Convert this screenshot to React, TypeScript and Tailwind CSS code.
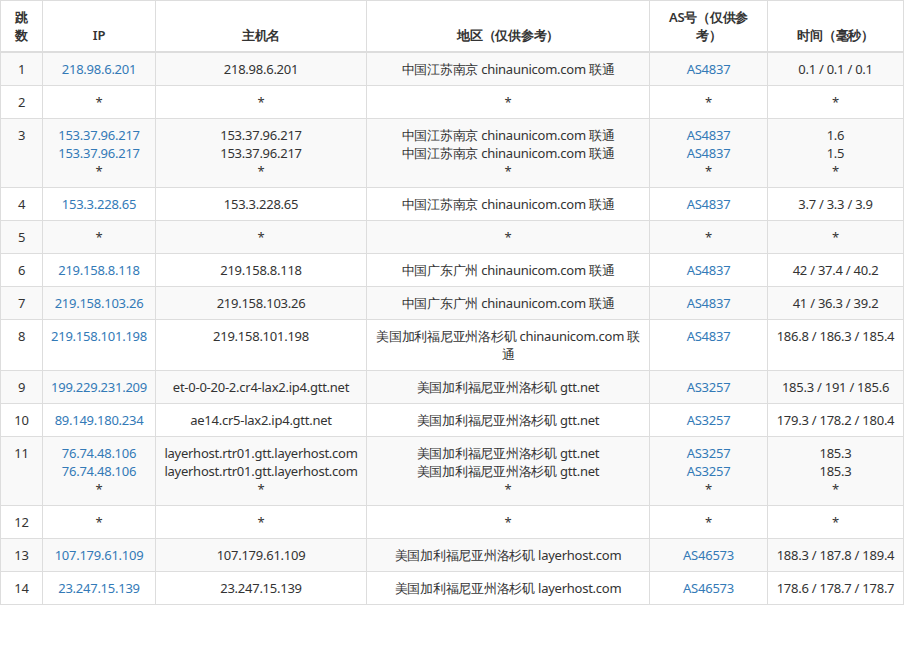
type Row = { n: number; ip: string[]; host: string[]; area: string[]; as: string[]; t: string[] };

const star = ["*"];
const rows: Row[] = [
  { n: 1, ip: ["218.98.6.201"], host: ["218.98.6.201"], area: ["中国江苏南京 chinaunicom.com 联通"], as: ["AS4837"], t: ["0.1 / 0.1 / 0.1"] },
  { n: 2, ip: star, host: star, area: star, as: star, t: star },
  {
    n: 3,
    ip: ["153.37.96.217", "153.37.96.217", "*"],
    host: ["153.37.96.217", "153.37.96.217", "*"],
    area: ["中国江苏南京 chinaunicom.com 联通", "中国江苏南京 chinaunicom.com 联通", "*"],
    as: ["AS4837", "AS4837", "*"],
    t: ["1.6", "1.5", "*"],
  },
  { n: 4, ip: ["153.3.228.65"], host: ["153.3.228.65"], area: ["中国江苏南京 chinaunicom.com 联通"], as: ["AS4837"], t: ["3.7 / 3.3 / 3.9"] },
  { n: 5, ip: star, host: star, area: star, as: star, t: star },
  { n: 6, ip: ["219.158.8.118"], host: ["219.158.8.118"], area: ["中国广东广州 chinaunicom.com 联通"], as: ["AS4837"], t: ["42 / 37.4 / 40.2"] },
  { n: 7, ip: ["219.158.103.26"], host: ["219.158.103.26"], area: ["中国广东广州 chinaunicom.com 联通"], as: ["AS4837"], t: ["41 / 36.3 / 39.2"] },
  { n: 8, ip: ["219.158.101.198"], host: ["219.158.101.198"], area: ["美国加利福尼亚州洛杉矶 chinaunicom.com 联通"], as: ["AS4837"], t: ["186.8 / 186.3 / 185.4"] },
  { n: 9, ip: ["199.229.231.209"], host: ["et-0-0-20-2.cr4-lax2.ip4.gtt.net"], area: ["美国加利福尼亚州洛杉矶 gtt.net"], as: ["AS3257"], t: ["185.3 / 191 / 185.6"] },
  { n: 10, ip: ["89.149.180.234"], host: ["ae14.cr5-lax2.ip4.gtt.net"], area: ["美国加利福尼亚州洛杉矶 gtt.net"], as: ["AS3257"], t: ["179.3 / 178.2 / 180.4"] },
  {
    n: 11,
    ip: ["76.74.48.106", "76.74.48.106", "*"],
    host: ["layerhost.rtr01.gtt.layerhost.com", "layerhost.rtr01.gtt.layerhost.com", "*"],
    area: ["美国加利福尼亚州洛杉矶 gtt.net", "美国加利福尼亚州洛杉矶 gtt.net", "*"],
    as: ["AS3257", "AS3257", "*"],
    t: ["185.3", "185.3", "*"],
  },
  { n: 12, ip: star, host: star, area: star, as: star, t: star },
  { n: 13, ip: ["107.179.61.109"], host: ["107.179.61.109"], area: ["美国加利福尼亚州洛杉矶 layerhost.com"], as: ["AS46573"], t: ["188.3 / 187.8 / 189.4"] },
  { n: 14, ip: ["23.247.15.139"], host: ["23.247.15.139"], area: ["美国加利福尼亚州洛杉矶 layerhost.com"], as: ["AS46573"], t: ["178.6 / 178.7 / 178.7"] },
];

function Lines({ items, link }: { items: string[]; link?: boolean }) {
  return (
    <>
      {items.map((s, i) => (
        <div key={i} className={link && s !== "*" ? "text-[#337ab7]" : ""}>
          {s}
        </div>
      ))}
    </>
  );
}

const td = "border border-[#ddd] px-2 py-[7px] align-top text-center";
const th = "border border-[#ddd] border-b-2 px-2 py-[7px] align-bottom text-center font-semibold";

export default function App() {
  return (
    <div className="w-[906px] bg-white text-[13px] leading-[18px] tracking-[-0.25px] text-[#333] [font-family:'Noto_Sans','Noto_Sans_CJK_SC',sans-serif]">
      <table className="w-[903px] table-fixed border-collapse">
        <colgroup>
          <col className="w-[42px]" />
          <col className="w-[113px]" />
          <col className="w-[211px]" />
          <col className="w-[283px]" />
          <col className="w-[118px]" />
          <col className="w-[136px]" />
        </colgroup>
        <thead>
          <tr>
            <th className={th}>跳数</th>
            <th className={th}>IP</th>
            <th className={th}>主机名</th>
            <th className={th}>地区（仅供参考）</th>
            <th className={th}>AS号（仅供参考）</th>
            <th className={th}>时间（毫秒）</th>
          </tr>
        </thead>
        <tbody>
          {rows.map((r) => (
            <tr key={r.n} className={r.n % 2 === 1 ? "bg-[#f9f9f9]" : "bg-white"}>
              <td className={td}>{r.n}</td>
              <td className={td}><Lines items={r.ip} link /></td>
              <td className={td}><Lines items={r.host} /></td>
              <td className={td}><Lines items={r.area} /></td>
              <td className={td}><Lines items={r.as} link /></td>
              <td className={td}><Lines items={r.t} /></td>
            </tr>
          ))}
        </tbody>
      </table>
    </div>
  );
}
